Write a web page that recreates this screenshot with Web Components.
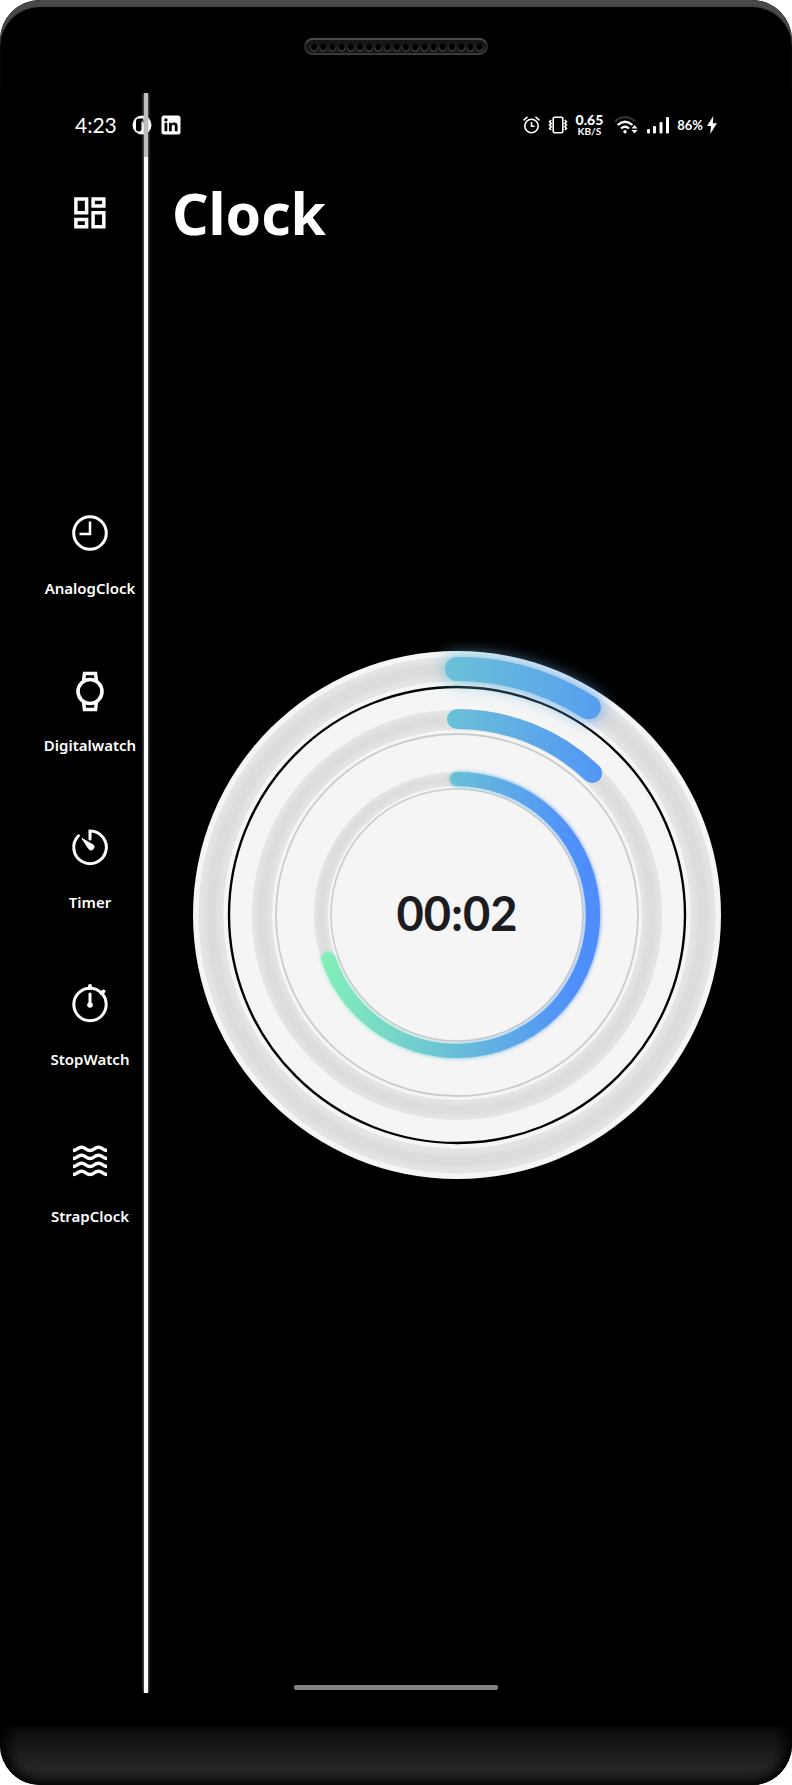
<!DOCTYPE html>
<html lang="en">
<head>
<meta charset="utf-8">
<meta name="viewport" content="width=device-width, initial-scale=1">
<title>Clock</title>
<style>
  body { margin: 0; background: #fff; font-family: "Noto Sans", sans-serif; color: #fff; }
</style>
</head>
<body>
<phone-frame>
  <status-bar slot="status" time="4:23" rate="0.65" unit="KB/S" battery="86%"></status-bar>
  <app-header slot="header">Clock</app-header>
  <nav-rail slot="nav">
    <nav-item icon="analog">AnalogClock</nav-item>
    <nav-item icon="watch">Digitalwatch</nav-item>
    <nav-item icon="timer">Timer</nav-item>
    <nav-item icon="stopwatch">StopWatch</nav-item>
    <nav-item icon="waves">StrapClock</nav-item>
  </nav-rail>
  <ring-clock time="00:02" outer="32.4" middle="43.6" inner="251"></ring-clock>
</phone-frame>

<script>
const define = (name, render) => customElements.define(name, class extends HTMLElement {
  connectedCallback() {
    if (this.shadowRoot) return;
    this.attachShadow({ mode: "open" }).innerHTML = render(this);
  }
});

define("speaker-grille", () => `
  <style>
    :host { display: block; width: 184px; height: 17px; }
    svg { display: block; }
  </style>
  <svg width="184" height="17" viewBox="0 0 184 17" aria-hidden="true">
    <defs>
      <linearGradient id="edge" x1="0" y1="0" x2="0" y2="1">
        <stop offset="0" stop-color="#4c4c4c"/><stop offset=".5" stop-color="#242424"/><stop offset="1" stop-color="#3a3a3a"/>
      </linearGradient>
      <linearGradient id="rim" x1="0" y1="0" x2="0" y2="1">
        <stop offset="0" stop-color="#111"/><stop offset="1" stop-color="#5a5a5a"/>
      </linearGradient>
    </defs>
    <rect x="1" y="1" width="182" height="15" rx="7.5" fill="#161616" stroke="url(#edge)" stroke-width="2"/>
    ${Array.from({ length: 19 }, (_, i) => `<ellipse cx="${(10 + i * 9.2).toFixed(1)}" cy="9.3" rx="3.6" ry="3.9" fill="#000" stroke="url(#rim)"/>`).join("")}
  </svg>`);

define("phone-frame", () => `
  <style>
    :host {
      display: flex; flex-direction: column; min-height: 100vh;
      background: #000; border-radius: 40px; overflow: hidden; position: relative;
    }
    .bezel {
      box-sizing: border-box; height: 93px; padding-top: 38px;
      display: flex; justify-content: center; align-items: flex-start;
      border-radius: 40px 40px 0 0;
      box-shadow: inset 0 7px 1px #484848, inset 8px 0 8px -6px #000, inset -8px 0 8px -6px #000;
    }
    .screen { flex: 1; display: flex; flex-direction: column; position: relative; }
    .main { flex: 1; display: grid; grid-template-columns: 144px 1fr; padding-right: 22px; align-items: center; }
    .home { box-sizing: border-box; height: 133px; padding-bottom: 3px; display: flex; justify-content: center; align-items: flex-end; }
    .home span { width: 204px; height: 5px; border-radius: 2px; background: #808080; }
    .divider {
      position: absolute; top: 0; bottom: 0; left: 144px; width: 4px;
      background: linear-gradient(#bdbdbd 64px, #fff 64px);
      box-shadow: 0 0 3px #bbb; clip-path: inset(0 -3px); pointer-events: none;
    }
    .chin {
      margin-top: 34px; height: 58px; border-radius: 0 0 40px 40px;
      background: linear-gradient(#0b0b0b, #141414 25%, #262626 70%, #202020);
      box-shadow: inset 0 -8px 14px -5px #000, inset 16px 0 14px -10px #000, inset -16px 0 14px -10px #000;
    }
  </style>
  <div class="bezel"><speaker-grille></speaker-grille></div>
  <div class="screen">
    <slot name="status"></slot>
    <slot name="header"></slot>
    <main class="main"><slot name="nav"></slot><slot></slot></main>
    <div class="home"><span></span></div>
    <div class="divider"></div>
  </div>
  <div class="chin"></div>`);

define("status-bar", el => `
  <style>
    :host {
      box-sizing: border-box; height: 64px; padding: 0 75px;
      display: flex; align-items: center; justify-content: space-between;
      font-family: Lato, sans-serif;
    }
    div { display: flex; align-items: center; }
    svg { display: block; flex: none; }
    .left { gap: 9px; }
    .time { font-size: 21px; line-height: 24px; margin-right: 6px; }
    .right { gap: 8px; }
    .rate { flex-direction: column; font-weight: 700; }
    .rate b { font-size: 14px; line-height: 12px; }
    .rate span { font-size: 10px; line-height: 10px; }
    .battery { gap: 4px; font: 700 13px/16px Lato, sans-serif; }
  </style>
  <div class="left">
    <span class="time">${el.getAttribute("time")}</span>
    <svg width="20" height="20" viewBox="0 0 20 20" aria-hidden="true">
      <circle cx="10" cy="10" r="9.5" fill="#fff"/>
      <rect x="4" y="3.5" width="5.5" height="13" rx="2.7" fill="#000"/>
      <path d="M8 3.600h3.200v3H8z" fill="#000"/><circle cx="13" cy="6.200" r="2.500" fill="#777"/>
    </svg>
    <svg width="20" height="20" viewBox="0 0 20 20" aria-hidden="true">
      <rect x=".5" y=".5" width="19" height="19" rx="2.500" fill="#fff"/>
      <circle cx="4.900" cy="4.900" r="1.700" fill="#000"/>
      <path d="M3.500 7.700h2.800v8.500H3.500zM8 7.700h2.700v1.200c.6-.9 1.500-1.400 2.700-1.400 2.400 0 3.200 1.500 3.200 3.900v4.800h-2.800v-4.300c0-1.200-.2-2.100-1.400-2.100s-1.600.9-1.600 2.100v4.300H8z" fill="#000"/>
    </svg>
  </div>
  <div class="right">
    <svg width="17" height="18" viewBox="0 0 17 18" fill="none" stroke="#fff" stroke-width="1.600" stroke-linecap="round" aria-hidden="true">
      <circle cx="8.500" cy="10" r="6.700"/><path d="M8.500 6.800v3.400h2.500M1 3.800 4 1.300M16 3.800l-3-2.500"/>
    </svg>
    <svg width="20" height="18" viewBox="0 0 20 18" fill="none" stroke="#fff" stroke-width="1.600" aria-hidden="true">
      <rect x="5.200" y="1.300" width="9.600" height="15.400" rx="1.500"/>
      <path d="m3.200 4-1.600 1.700 1.600 1.700-1.600 1.700 1.600 1.700-1.600 1.700 1.600 1.500M16.800 4l1.600 1.700-1.600 1.700 1.600 1.700-1.600 1.700 1.600 1.700-1.600 1.500"/>
    </svg>
    <div class="rate"><b>${el.getAttribute("rate")}</b><span>${el.getAttribute("unit")}</span></div>
    <svg width="28" height="18" viewBox="-4 0 28 18" fill="none" stroke="#fff" stroke-width="2.200" aria-hidden="true">
      <path d="M0 5.300Q10 -3 20 5.300" stroke="#333"/>
      <path d="M2.600 9Q10 2.500 17.500 9M6 12.500q4-3.500 8 0"/>
      <circle cx="10" cy="15.800" r="1.700" fill="#fff" stroke="none"/>
      <path d="m16.500 12.500 3-3.500 3 3.500zM16.500 14l3 3.500 3-3.500z" fill="#fff" stroke="none"/>
    </svg>
    <svg width="22" height="18" viewBox="0 0 22 18" fill="#fff" aria-hidden="true">
      <rect x="0" y="13" width="3" height="4.500" rx="1"/><rect x="6" y="10" width="3" height="7.500" rx="1"/>
      <rect x="12.500" y="6" width="3" height="11.500" rx="1"/><rect x="19" y="1" width="3" height="16.500" rx="1"/>
    </svg>
    <div class="battery">${el.getAttribute("battery")}
      <svg width="10" height="18" viewBox="0 0 10 18" aria-hidden="true"><path d="M6.300 0 0 10h4L3.200 18 10 7.200H5.800z" fill="#fff"/></svg>
    </div>
  </div>`);

define("app-header", () => `
  <style>
    :host { box-sizing: border-box; height: 112px; padding-left: 74px; display: flex; align-items: center; gap: 66px; }
    button { margin: 0; padding: 0; border: 0; background: none; color: inherit; cursor: pointer; }
    svg { display: block; }
    h1 { margin: 0; font: 700 57px/64px "Noto Sans", sans-serif; }
  </style>
  <button aria-label="Dashboard">
    <svg width="32" height="32" viewBox="0 0 32 32" fill="none" stroke="currentColor" stroke-width="3.500">
      <path d="M1.900 1.900h10.700v13.800H1.900zM19.100 1.900h10.700v7.200H19.100zM1.900 22.500h10.700v7.200H1.900zM19.100 15.800h10.700v13.900H19.100z"/>
    </svg>
  </button>
  <h1><slot></slot></h1>`);

define("nav-rail", () => `
  <style>
    :host { display: block; padding: 0 0 88px 36px; }
    nav { display: flex; flex-direction: column; gap: 70px; }
  </style>
  <nav><slot></slot></nav>`);

/* each wave row alternates two crests and a trough around its own baseline */
const wave = y => `<path transform="translate(0 ${y})" d="M3 4.500C7 4.500 7.500 1.300 11.500 1.300S16 4.500 20 4.500 24.500 1.300 28.500 1.300 33 4.500 37 4.500" stroke-width="3.500"/>`;
const ICONS = {
  analog: `<circle cx="20" cy="20" r="16.300"/><path d="M20 8.500V21H9.500" stroke-width="2.500"/>`,
  watch: `<circle cx="20" cy="21.500" r="12" stroke-width="3.600"/><path d="m13.500 11.500 1-8h11l1 8M13.500 31.500l1 8h11l1-8" stroke-width="3.500"/>`,
  timer: `<path d="M20 12V4A16.300 16.300 0 1 1 8.500 8.800" stroke-linecap="round"/><path d="m12 11.500 9.500 5.500a3 3 0 1 1-3 4.500z" fill="currentColor" stroke-width="1"/>`,
  stopwatch: `<circle cx="20" cy="20.500" r="16.200"/><path d="M20 10v10" stroke-linecap="round"/><path d="M20 4V2M31.500 9l2-1.500" stroke-width="4" stroke-linecap="round"/><circle cx="20" cy="21" r="2.800" fill="currentColor" stroke="none"/>`,
  waves: [5, 13, 21, 29].map(wave).join("")
};

define("nav-item", el => `
  <style>
    :host { display: block; }
    a { display: flex; flex-direction: column; align-items: center; gap: 23px; color: inherit; text-decoration: none; }
    svg { display: block; overflow: visible; }
    span { font: 600 15px/24px "Noto Sans", sans-serif; white-space: nowrap; }
  </style>
  <a href="#${el.getAttribute("icon")}">
    <svg width="40" height="40" viewBox="0 0 40 40" fill="none" stroke="currentColor" stroke-width="3" aria-hidden="true">${ICONS[el.getAttribute("icon")]}</svg>
    <span><slot></slot></span>
  </a>`);

/* arc path that starts at twelve o'clock and runs clockwise */
const arc = (r, deg) => {
  const a = deg * Math.PI / 180;
  return `M0 ${-r}A${r} ${r} 0 ${deg > 180 ? 1 : 0} 1 ${(r * Math.sin(a)).toFixed(2)} ${(-r * Math.cos(a)).toFixed(2)}`;
};
const gradient = (id, r) => `
  <linearGradient id="${id}" gradientUnits="userSpaceOnUse" x1="${-r}" x2="${r}" y1="0" y2="0">
    <stop offset="0" stop-color="#84f3b6"/><stop offset=".5" stop-color="#69bed8"/><stop offset=".9" stop-color="#4f90fa"/><stop offset="1" stop-color="#4e8cfa"/>
  </linearGradient>`;
const track = (r, w) => `
  <circle r="${r}" stroke="#e4e4e4" stroke-width="${w}"/>
  <circle r="${r}" stroke="#dcdcdc" stroke-width="${w / 2}" filter="url(#soft)"/>`;

define("ring-clock", el => `
  <style>
    :host { display: flex; justify-content: center; }
    svg { display: block; width: 100%; max-width: 528px; overflow: visible; }
    text { font: 700 47px Lato, sans-serif; }
  </style>
  <svg viewBox="-264 -264 528 528" fill="none" role="img" aria-label="Clock">
    <defs>
      ${gradient("g1", 258)}${gradient("g2", 206)}${gradient("g3", 143)}
      <filter id="soft" filterUnits="userSpaceOnUse" x="-264" y="-264" width="528" height="528"><feGaussianBlur stdDeviation="2"/></filter>
      <filter id="glow" filterUnits="userSpaceOnUse" x="-300" y="-300" width="600" height="600"><feGaussianBlur stdDeviation="9"/></filter>
      <filter id="halo" filterUnits="userSpaceOnUse" x="-264" y="-264" width="528" height="528"><feGaussianBlur stdDeviation="2"/></filter>
    </defs>
    <circle r="264" fill="#f5f5f5"/>
    ${track(246, 25)}
    <circle r="228" stroke="#000" stroke-width="2.400"/>
    <g stroke-linecap="round">
      <path d="${arc(246, +el.getAttribute("outer"))}" stroke="url(#g1)" stroke-width="25" filter="url(#glow)"/>
      <path d="${arc(246, +el.getAttribute("outer"))}" stroke="url(#g1)" stroke-width="24"/>
    </g>
    ${track(195, 20)}
    <circle r="181" stroke="#ccc" stroke-width="1.800"/>
    <path d="${arc(196, +el.getAttribute("middle"))}" stroke="url(#g2)" stroke-width="20" stroke-linecap="round"/>
    ${track(136, 14)}
    <circle r="126" stroke="#ccc" stroke-width="1.600"/>
    <g stroke-linecap="round">
      <path d="${arc(136, +el.getAttribute("inner"))}" stroke="url(#g3)" stroke-width="14" filter="url(#halo)"/>
      <path d="${arc(136, +el.getAttribute("inner"))}" stroke="url(#g3)" stroke-width="14"/>
    </g>
    <text y="16" text-anchor="middle" fill="#1c1b20">${el.getAttribute("time")}</text>
  </svg>`);
</script>
</body>
</html>
